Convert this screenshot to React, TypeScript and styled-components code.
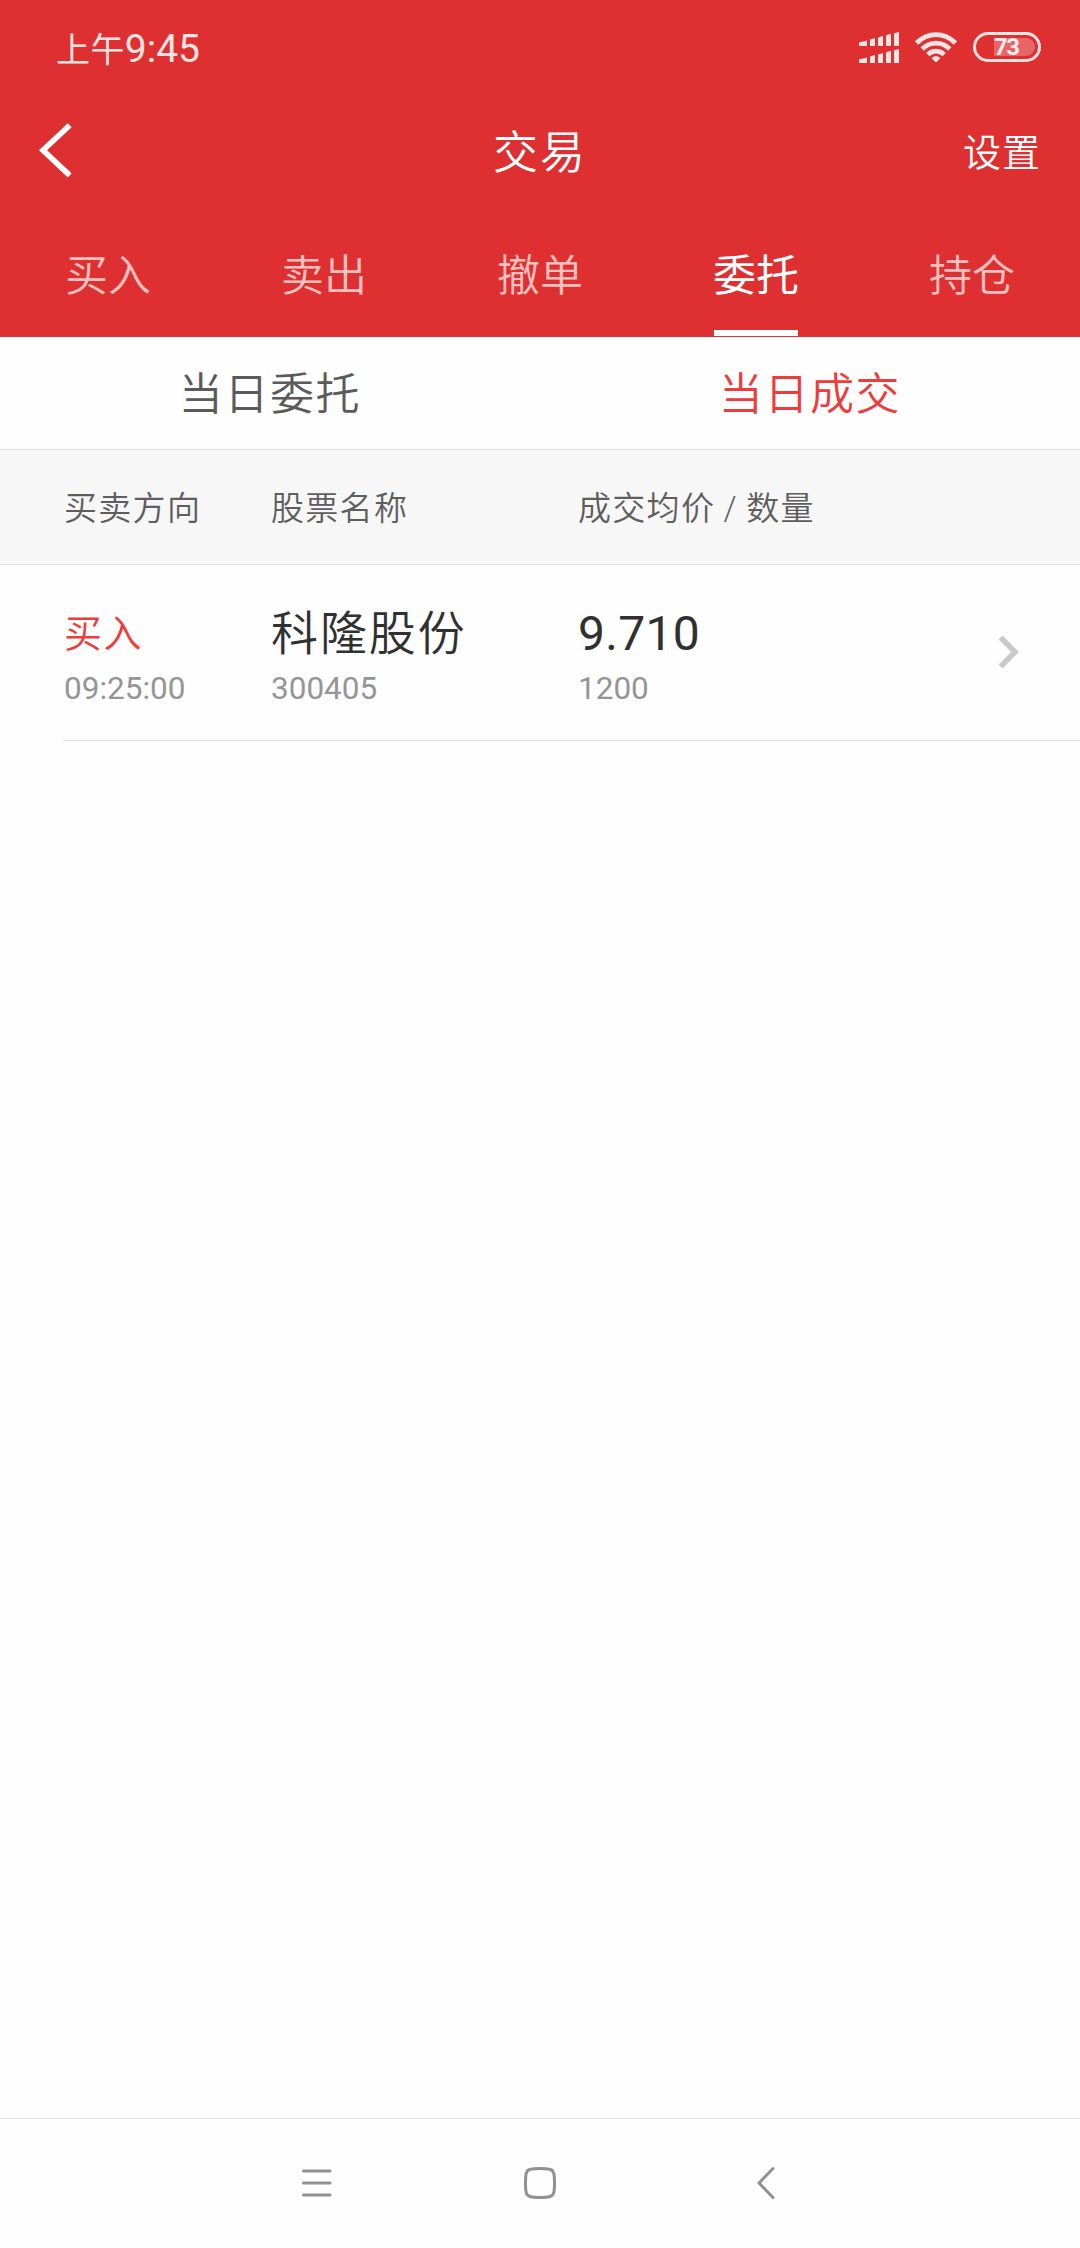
import React from "react";
import styled, { createGlobalStyle } from "styled-components";

const GlobalStyle = createGlobalStyle`
  * { box-sizing: border-box; }
  body { margin: 0; background: #fefefe; }
`;

const Screen = styled.div`
  display: flex;
  flex-direction: column;
  width: 1080px;
  height: 2248px;
  background: #fefefe;
  font-family: Roboto, "Noto Sans CJK SC", sans-serif;
  font-weight: 400;
`;

const Header = styled.header`
  display: flex;
  flex-direction: column;
  height: 337px;
  background: #de3031;
  color: #fff;
`;

const StatusBar = styled.div`
  display: flex;
  align-items: center;
  justify-content: space-between;
  height: 94px;
  padding: 4px 39px 0 56px;
`;

const Clock = styled.span`
  display: flex;
  align-items: baseline;
  font-size: 39px;
  line-height: 44px;
  color: #ffe3e3;
`;

const Meridiem = styled.span`
  font-size: 34px;
  letter-spacing: 0.4px;
`;

const StatusIcons = styled.div`
  display: flex;
  align-items: center;
  gap: 16px;
  padding-bottom: 4px;
`;

const Battery = styled.div`
  display: flex;
  align-items: center;
  width: 68px;
  height: 30px;
  padding: 0 3px 0 18px;
  border: 3px solid #ffe3e3;
  border-radius: 15px;
`;

const BatteryLevel = styled.span`
  width: 41px;
  height: 18px;
  border-radius: 0 9px 9px 0;
  background: #e76567;
  color: #ffecec;
  font-size: 24px;
  font-weight: 700;
  line-height: 19px;
  letter-spacing: -1.6px;
`;

const TitleBar = styled.div`
  display: grid;
  grid-template-columns: 1fr auto 1fr;
  align-items: center;
  height: 116px;
  padding: 0 39px 0 36px;
`;

const BackButton = styled.button`
  display: flex;
  padding: 0 0 7px;
  border: 0;
  background: none;
`;

const Title = styled.h1`
  margin: 0;
  padding: 3px 0 0 3px;
  font-size: 45px;
  font-weight: 350;
  line-height: 60px;
  letter-spacing: 2px;
`;

const SettingsLink = styled.span`
  justify-self: end;
  padding-top: 1px;
  font-size: 38px;
  font-weight: 350;
  line-height: 52px;
  letter-spacing: 1px;
`;

const TabBar = styled.nav`
  display: grid;
  grid-template-columns: repeat(5, 1fr);
  height: 127px;
`;

const Tab = styled.div<{ $active?: boolean }>`
  display: flex;
  justify-content: center;
  justify-self: center;
  width: 84px;
  height: 126px;
  padding-top: 38px;
  border-bottom: 6px solid ${(p) => (p.$active ? "#fff" : "transparent")};
  color: ${(p) => (p.$active ? "#fff" : "#ffc0c0")};
  font-size: 43px;
  font-weight: ${(p) => (p.$active ? 400 : 350)};
  line-height: 56px;
  white-space: nowrap;
`;

const SubTabs = styled.div`
  display: grid;
  grid-template-columns: 1fr 1fr;
  height: 113px;
  border-bottom: 1px solid #dedede;
`;

const SubTab = styled.div<{ $active?: boolean }>`
  display: flex;
  align-items: center;
  justify-content: center;
  padding-bottom: 4px;
  color: ${(p) => (p.$active ? "#ee3b3b" : "#5a5a5a")};
  font-size: 44px;
  font-weight: 350;
  letter-spacing: 1.6px;
`;

const columns = "207px 307px 1fr auto";

const TableHead = styled.div`
  display: grid;
  grid-template-columns: ${columns};
  align-items: center;
  height: 115px;
  padding: 0 0 3px 64px;
  border-bottom: 1px solid #dedede;
  background: #f7f7f7;
  color: #5e5e5e;
  font-size: 33px;
  font-weight: 350;
  letter-spacing: 1.3px;
  word-spacing: -1px;
`;

const Row = styled.div`
  display: grid;
  grid-template-columns: ${columns};
  height: 176px;
  margin-left: 63px;
  padding: 37px 60px 0 1px;
  border-bottom: 1px solid #dcdcdc;
`;

const Cell = styled.div`
  display: flex;
  flex-direction: column;
`;

const Primary = styled.span<{ $tone?: "buy"; $size: number; $spacing?: number; $weight?: number }>`
  height: 62px;
  color: ${(p) => (p.$tone === "buy" ? "#ee3b3b" : "#303030")};
  font-size: ${(p) => p.$size}px;
  font-weight: ${(p) => p.$weight ?? 400};
  line-height: 64px;
  letter-spacing: ${(p) => p.$spacing ?? 0}px;
`;

const Secondary = styled.span`
  color: #959595;
  font-size: 31.5px;
  line-height: 50px;
`;

const RowArrow = styled.span`
  display: flex;
  padding-top: 32px;
`;

const Content = styled.main`
  flex: 1;
`;

const NavBar = styled.footer`
  display: grid;
  grid-template-columns: repeat(3, 226px);
  justify-content: center;
  align-items: center;
  justify-items: center;
  height: 130px;
  padding-bottom: 2px;
  border-top: 1px solid #e4e4e4;
`;

const SignalIcon = () => (
  <svg width="40" height="31" viewBox="0 0 40 31" fill="#ffe3e3">
    {[0, 17].map((y) => (
      <g key={y} transform={`translate(0 ${y})`}>
        <path d="M0 10.500L8 8.500V14H0z" />
        <path d="M11 7.500L16 6V14H11z" />
        <path d="M19 5.500L24 4V14H19z" />
        <path d="M27 3.200L32 1.800V14H27z" />
        <path d="M35 1.300L40 0V14H35z" />
      </g>
    ))}
  </svg>
);

const WifiIcon = () => (
  <svg width="42" height="31" viewBox="0 0 42 31" fill="none" stroke="#ffe3e3" strokeWidth="4.8">
    <path d="M1.500 11C12.500-.3 29.500-.3 40.500 11" />
    <path d="M7.200 17C15 9.200 27 9.200 34.800 17" />
    <path d="M12.800 22.600C17.500 18 24.500 18 29.200 22.600" />
    <path d="M21 30.500L16.600 26.200C19 23.600 23 23.600 25.400 26.200z" fill="#ffe3e3" stroke="none" />
  </svg>
);

const orders = [
  { side: "买入", time: "09:25:00", name: "科隆股份", code: "300405", price: "9.710", amount: "1200" },
];

const tabs = ["买入", "卖出", "撤单", "委托", "持仓"];

export default function App() {
  return (
    <Screen>
      <GlobalStyle />
      <Header>
        <StatusBar>
          <Clock>
            <Meridiem>上午</Meridiem>9:45
          </Clock>
          <StatusIcons>
            <SignalIcon />
            <WifiIcon />
            <Battery>
              <BatteryLevel>73</BatteryLevel>
            </Battery>
          </StatusIcons>
        </StatusBar>
        <TitleBar>
          <BackButton aria-label="返回">
            <svg width="40" height="60" viewBox="0 0 40 60" fill="none" stroke="#fff" strokeWidth="5.6">
              <path d="M33.700 6.200L7 31.300L33.700 56.400" />
            </svg>
          </BackButton>
          <Title>交易</Title>
          <SettingsLink>设置</SettingsLink>
        </TitleBar>
        <TabBar>
          {tabs.map((t) => (
            <Tab key={t} $active={t === "委托"}>
              {t}
            </Tab>
          ))}
        </TabBar>
      </Header>
      <SubTabs>
        <SubTab>当日委托</SubTab>
        <SubTab $active>当日成交</SubTab>
      </SubTabs>
      <TableHead>
        <span>买卖方向</span>
        <span>股票名称</span>
        <span>成交均价 / 数量</span>
      </TableHead>
      <Content>
        {orders.map((o) => (
          <Row key={o.code}>
            <Cell>
              <Primary $tone="buy" $size={38} $spacing={1.5} $weight={350}>{o.side}</Primary>
              <Secondary>{o.time}</Secondary>
            </Cell>
            <Cell>
              <Primary $size={47} $spacing={1.9} $weight={350}>{o.name}</Primary>
              <Secondary>{o.code}</Secondary>
            </Cell>
            <Cell>
              <Primary $size={48} $spacing={0.3}>{o.price}</Primary>
              <Secondary>{o.amount}</Secondary>
            </Cell>
            <RowArrow>
              <svg width="24" height="36" viewBox="0 0 24 36" fill="none" stroke="#c9c9c9" strokeWidth="5.6">
                <path d="M4.600 3.600L19 18L4.600 32.400" />
              </svg>
            </RowArrow>
          </Row>
        ))}
      </Content>
      <NavBar>
        <svg width="36" height="36" viewBox="0 0 36 36" stroke="#919191" strokeWidth="3" strokeLinecap="round">
          <path d="M7.500 6H34M7.500 18H34M7.500 30H34" />
        </svg>
        <svg width="36" height="36" viewBox="0 0 36 36" fill="none" stroke="#919191" strokeWidth="3">
          <path d="M18 3.500C22.500 3.500 25.500 3.700 27.500 4.200C30 4.800 31.200 6 31.800 8.500C32.300 10.500 32.500 13.500 32.500 18S32.300 25.500 31.800 27.500C31.200 30 30 31.200 27.500 31.800C25.500 32.300 22.500 32.500 18 32.500S10.500 32.300 8.500 31.800C6 31.200 4.800 30 4.200 27.500C3.700 25.500 3.500 22.500 3.500 18S3.700 10.500 4.200 8.500C4.800 6 6 4.800 8.500 4.200C10.500 3.700 13.500 3.500 18 3.500z" />
        </svg>
        <svg width="36" height="36" viewBox="0 0 36 36" fill="none" stroke="#919191" strokeWidth="3" strokeLinecap="round" strokeLinejoin="round">
          <path d="M25 3.500L11 18L25 32.500" />
        </svg>
      </NavBar>
    </Screen>
  );
}
